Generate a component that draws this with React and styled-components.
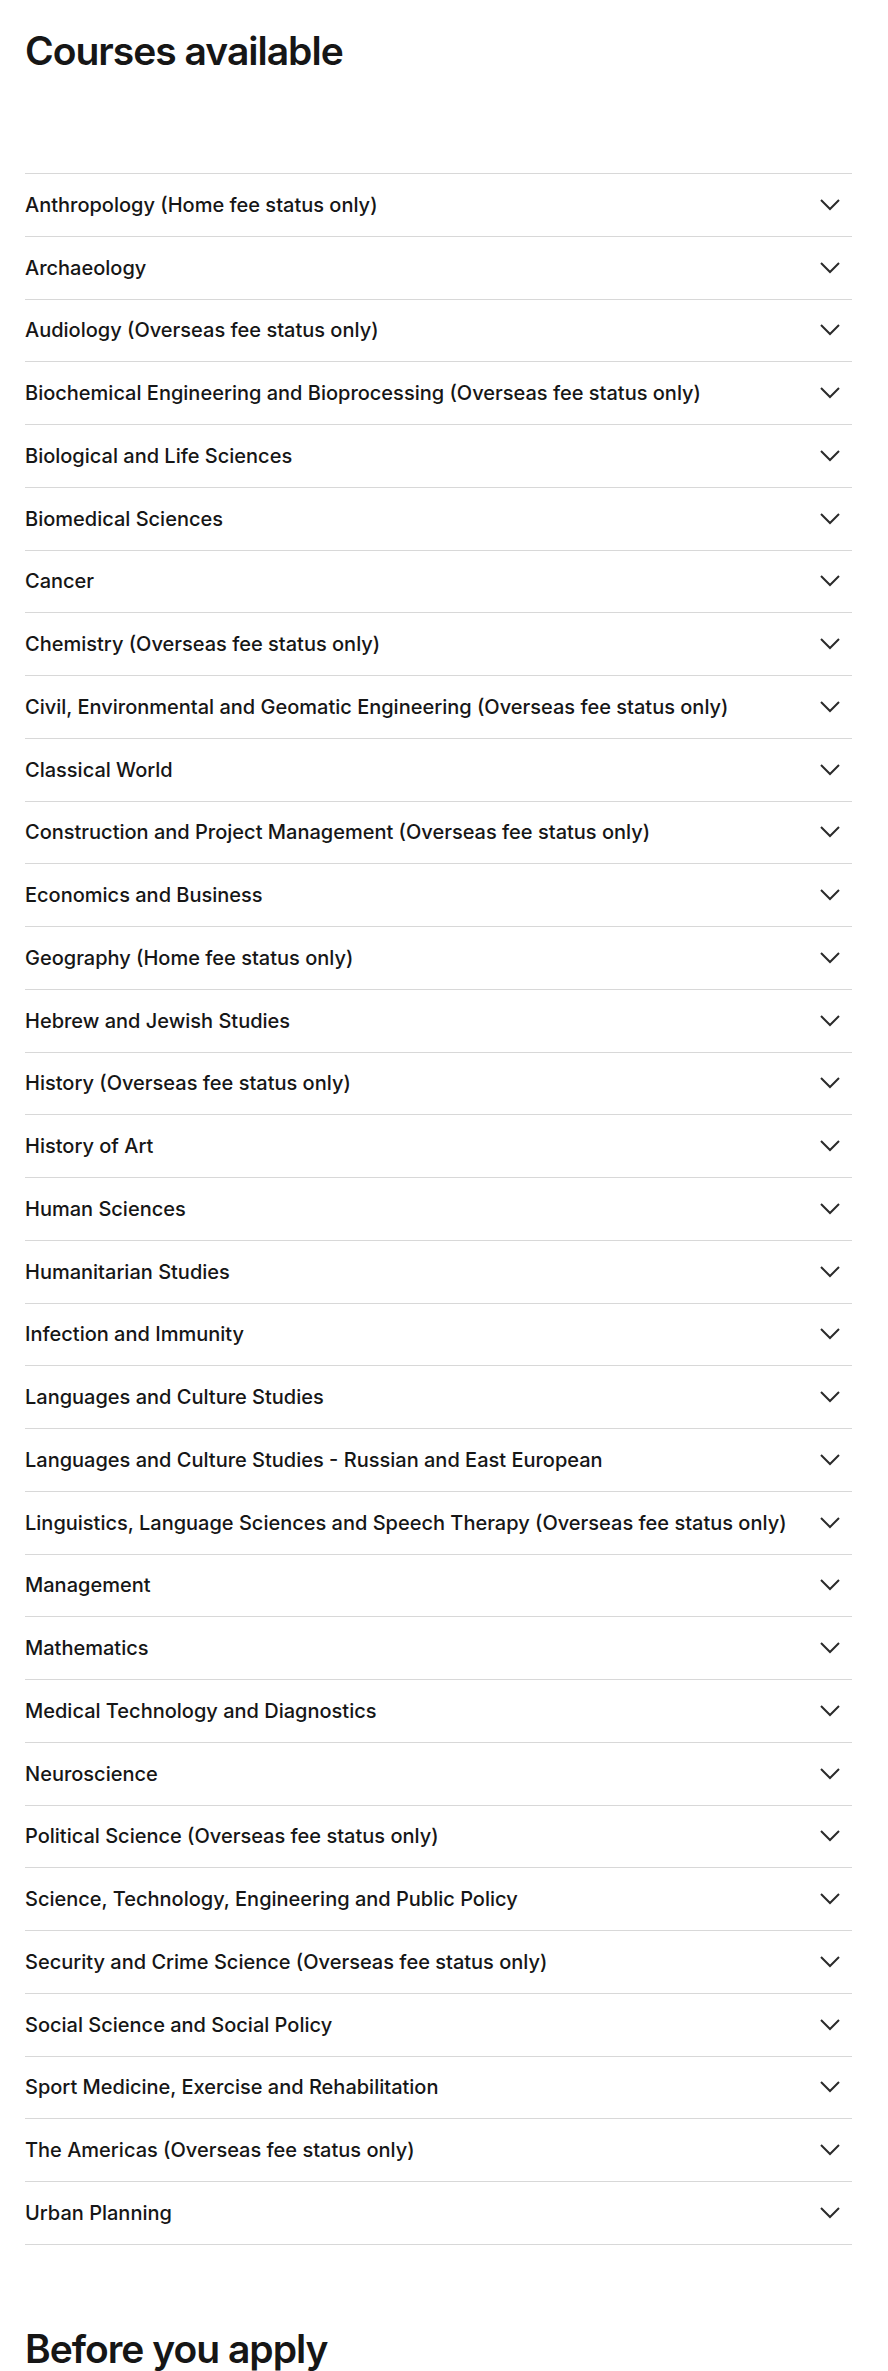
import { createGlobalStyle, styled } from 'styled-components';

const GlobalStyle = createGlobalStyle`
    body {
        margin: 0;
        background: #fff;
        color: #161616;
        font-family: Inter, "Noto Sans", sans-serif;
    }
`;

const Page = styled.main`
    padding: 0 36px 0 25px;
`;

const Heading = styled.h2`
    margin: 0;
    padding-top: 27px;
    font-size: 39px;
    font-weight: 600;
    line-height: 48px;
    letter-spacing: -1px;
`;

const CourseList = styled.ul`
    list-style: none;
    margin: 98px 0 0;
    padding: 0;
    border-top: 1px solid #d8d8d8;
`;

const CourseRow = styled.li`
    display: flex;
    align-items: center;
    justify-content: space-between;
    height: 61.75px;
    border-bottom: 1px solid #d8d8d8;
    font-size: 20px;
    font-weight: 500;
    cursor: pointer;
`;

const Chevron = styled.svg`
    width: 22px;
    height: 14px;
    margin-right: 11px;
    flex-shrink: 0;
`;

const NextSection = styled(Heading)`
    padding-top: 80px;
`;

const courses = [
    'Anthropology (Home fee status only)',
    'Archaeology',
    'Audiology (Overseas fee status only)',
    'Biochemical Engineering and Bioprocessing (Overseas fee status only)',
    'Biological and Life Sciences',
    'Biomedical Sciences',
    'Cancer',
    'Chemistry (Overseas fee status only)',
    'Civil, Environmental and Geomatic Engineering (Overseas fee status only)',
    'Classical World',
    'Construction and Project Management (Overseas fee status only)',
    'Economics and Business',
    'Geography (Home fee status only)',
    'Hebrew and Jewish Studies',
    'History (Overseas fee status only)',
    'History of Art',
    'Human Sciences',
    'Humanitarian Studies',
    'Infection and Immunity',
    'Languages and Culture Studies',
    'Languages and Culture Studies - Russian and East European',
    'Linguistics, Language Sciences and Speech Therapy (Overseas fee status only)',
    'Management',
    'Mathematics',
    'Medical Technology and Diagnostics',
    'Neuroscience',
    'Political Science (Overseas fee status only)',
    'Science, Technology, Engineering and Public Policy',
    'Security and Crime Science (Overseas fee status only)',
    'Social Science and Social Policy',
    'Sport Medicine, Exercise and Rehabilitation',
    'The Americas (Overseas fee status only)',
    'Urban Planning',
];

export default function App() {
    return (
        <>
            <GlobalStyle />
            <Page>
                <Heading>Courses available</Heading>
                <CourseList>
                    {courses.map((name) => (
                        <CourseRow key={name}>
                            <span>{name}</span>
                            <Chevron viewBox="0 0 22 14" fill="none">
                                <path d="M2 2l9 9 9-9" stroke="#2b2b2b" strokeWidth="2" />
                            </Chevron>
                        </CourseRow>
                    ))}
                </CourseList>
                <NextSection>Before you apply</NextSection>
            </Page>
        </>
    );
}
